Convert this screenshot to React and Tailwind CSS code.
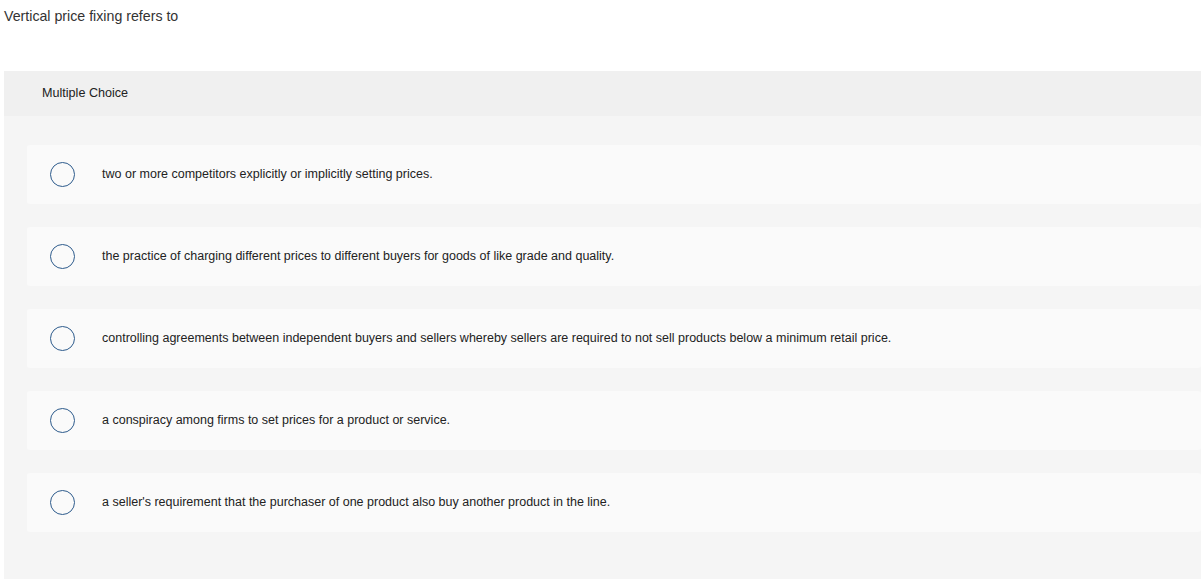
const options = [
  "two or more competitors explicitly or implicitly setting prices.",
  "the practice of charging different prices to different buyers for goods of like grade and quality.",
  "controlling agreements between independent buyers and sellers whereby sellers are required to not sell products below a minimum retail price.",
  "a conspiracy among firms to set prices for a product or service.",
  "a seller's requirement that the purchaser of one product also buy another product in the line.",
]

export default function App() {
  return (
    <div className="min-h-screen bg-white font-['Liberation_Sans',Arial,sans-serif] text-[#333]">
      {/* question */}
      <div className="h-[71px] pl-[4px] pt-[6px] text-[14.2px] text-[#333]">
        Vertical price fixing refers to
      </div>

      <div className="ml-[4px] bg-[#f5f5f5] h-[508px]">
        <div className="h-[45px] bg-[#f0f0f0] pl-[38px] flex items-center text-[12.6px] text-[#222]">
          Multiple Choice
        </div>

        <div className="pt-[29px] pl-[23px] flex flex-col gap-[23px]">
          {options.map((opt, i) => (
            <div key={i} className="h-[59px] bg-[#fafafa] rounded-[3px] flex items-center">
              <div className="ml-[23px] w-[25px] h-[25px] rounded-full border-[1.5px] border-[#2d5b8c] shrink-0" />
              <div className="ml-[27px] text-[12.5px] text-[#222]">{opt}</div>
            </div>
          ))}
        </div>
      </div>
    </div>
  )
}
